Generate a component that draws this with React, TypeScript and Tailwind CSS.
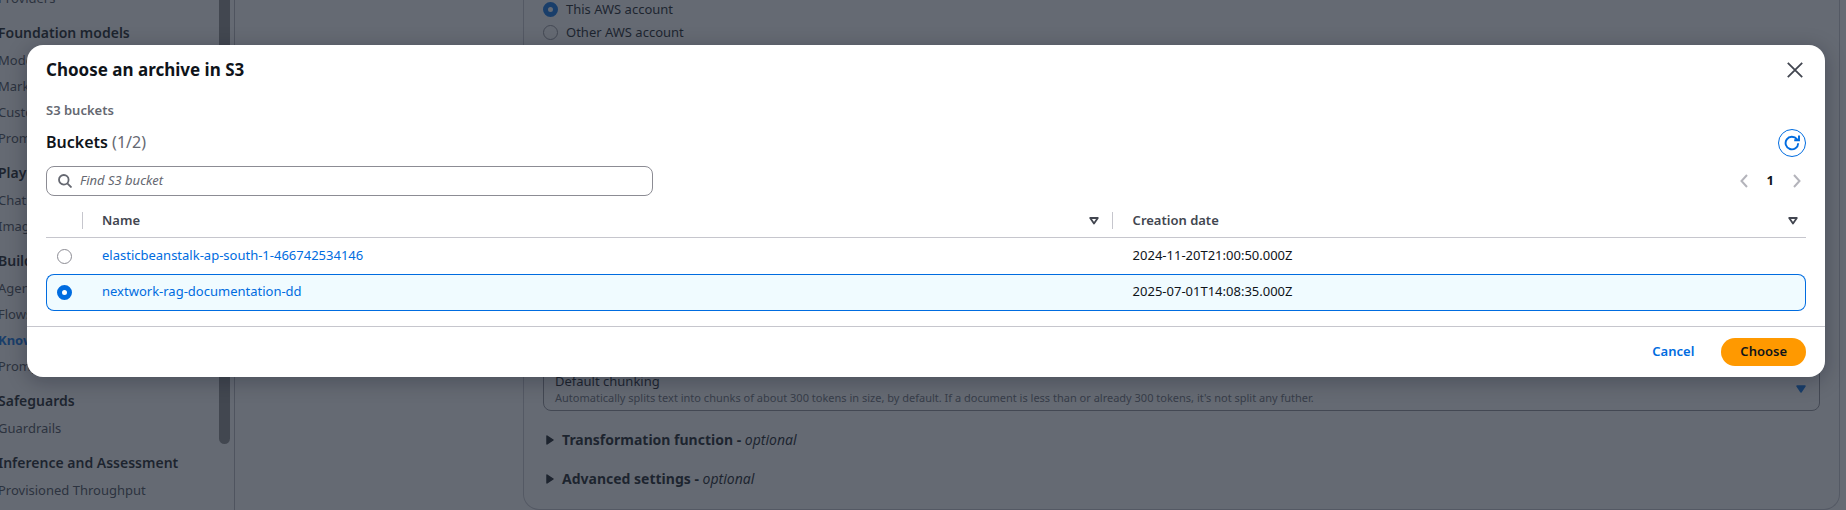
import { useState } from "react";

type NavItem = { label: string; current?: boolean };
type NavSection = { title: string; items: NavItem[] };

const sections: NavSection[] = [
  {
    title: "Foundation models",
    items: [
      { label: "Model catalog" },
      { label: "Marketplace" },
      { label: "Custom models" },
      { label: "Prompt routers" },
    ],
  },
  { title: "Playgrounds", items: [{ label: "Chat / Text" }, { label: "Image / Video" }] },
  {
    title: "Builder tools",
    items: [
      { label: "Agents" },
      { label: "Flows" },
      { label: "Knowledge Bases", current: true },
      { label: "Prompt Management" },
    ],
  },
  { title: "Safeguards", items: [{ label: "Guardrails" }] },
  { title: "Inference and Assessment", items: [{ label: "Provisioned Throughput" }] },
];

const buckets = [
  { name: "elasticbeanstalk-ap-south-1-466742534146", created: "2024-11-20T21:00:50.000Z" },
  { name: "nextwork-rag-documentation-dd", created: "2025-07-01T14:08:35.000Z" },
];

const radioClass =
  "m-0 block size-[15px] shrink-0 appearance-none rounded-full border border-[#8c8c94] bg-white checked:border-[5px] checked:border-[#006ce0]";

function NavLink({ label, current }: NavItem) {
  return (
    <li>
      <a
        href="#"
        className={
          current
            ? "block whitespace-nowrap font-bold leading-[26px] text-[#006ce0]"
            : "block whitespace-nowrap leading-[26px] text-[#424650]"
        }
      >
        {label}
      </a>
    </li>
  );
}

function SideNav() {
  return (
    <nav className="flex w-[235px] shrink-0 justify-between overflow-hidden border-r border-[#b4b4bb] pr-1">
      <div className="-ml-0.5 -mt-[15px] w-[200px]">
        <ul>
          <NavLink label="Providers" />
        </ul>
        {sections.map((section) => (
          <section key={section.title} className="mt-2">
            <h2 className="whitespace-nowrap text-sm font-semibold leading-7 text-[#0f141a]">{section.title}</h2>
            <ul>
              {section.items.map((item) => (
                <NavLink key={item.label} {...item} />
              ))}
            </ul>
          </section>
        ))}
      </div>
      <div className="h-[444px] w-[11px] rounded-b-full bg-[#8b8b8b]" />
    </nav>
  );
}

function Expandable({ title }: { title: string }) {
  return (
    <button type="button" className="flex items-center gap-2 text-left leading-5">
      <svg viewBox="0 0 8 10" className="ml-[3px] h-[10px] w-2" aria-hidden="true">
        <path d="M1 1v8l6-4z" fill="#0f141a" stroke="#0f141a" strokeWidth="1.5" strokeLinejoin="round" />
      </svg>
      <span className="text-sm leading-5 text-[#0f141a]">
        <b>{title} - </b>
        <i>optional</i>
      </span>
    </button>
  );
}

function SettingsPage() {
  return (
    <main className="flex min-w-0 grow pl-[288px] pr-[6px]">
      <div className="flex grow flex-col rounded-b-2xl border border-t-0 border-[#c6c6cd] px-[19px] pb-5">
        <fieldset className="flex flex-col gap-[3px] leading-5 text-[#0f141a]">
          <label className="-mt-px flex items-center gap-2">
            <input type="radio" name="account" defaultChecked className={radioClass} />
            This AWS account
          </label>
          <label className="flex items-center gap-2">
            <input type="radio" name="account" className={radioClass} />
            Other AWS account
          </label>
        </fieldset>
        <button
          type="button"
          aria-haspopup="listbox"
          className="mt-auto flex items-center justify-between rounded-lg border border-[#8c8c94] px-[11px] pb-1 pt-1 text-left"
        >
          <span className="flex flex-col">
            <span className="leading-[18px] text-[#0f141a]">Default chunking</span>
            <span className="text-[11px] leading-4 text-[#656871]">
              Automatically splits text into chunks of about 300 tokens in size, by default. If a document is less than
              or already 300 tokens, it's not split any futher.
            </span>
          </span>
          <svg viewBox="0 0 10 8" className="mr-0.5 h-2 w-[10px]" aria-hidden="true">
            <path d="M1 1h8l-4 6z" fill="#006ce0" stroke="#006ce0" strokeWidth="1.5" strokeLinejoin="round" />
          </svg>
        </button>
        <div className="mt-[19px] flex flex-col gap-[19px]">
          <Expandable title="Transformation function" />
          <Expandable title="Advanced settings" />
        </div>
      </div>
    </main>
  );
}

function SortIcon() {
  return (
    <svg viewBox="0 0 10 8" className="h-2 w-[10px]" fill="none" aria-hidden="true">
      <path d="M1.2 1h7.6L5 6.6z" stroke="#424650" strokeWidth="1.8" strokeLinejoin="round" />
    </svg>
  );
}

function Chevron({ d }: { d: string }) {
  return (
    <svg viewBox="0 0 8 14" className="h-[14px] w-2" fill="none" aria-hidden="true">
      <path d={d} stroke="#b4b4bb" strokeWidth="2" />
    </svg>
  );
}

function BucketTable({ selected, onSelect }: { selected: number; onSelect: (index: number) => void }) {
  return (
    <table className="mt-2 w-full table-fixed border-separate border-spacing-0 text-left">
      <thead>
        <tr className="h-[34px] text-[#424650]">
          <th className="w-[37px] border-b border-[#c6c6cd] p-0" aria-label="Selection">
            <div className="h-[17px] border-r border-[#c6c6cd]" />
          </th>
          <th className="w-[58.5%] border-b border-[#c6c6cd] p-0">
            <div className="flex h-[17px] items-center justify-between border-r border-[#c6c6cd] pl-[19px] pr-[13px] font-semibold">
              Name
              <SortIcon />
            </div>
          </th>
          <th className="border-b border-[#c6c6cd] p-0">
            <div className="flex h-[17px] items-center justify-between pl-5 pr-2 font-semibold">
              Creation date
              <SortIcon />
            </div>
          </th>
        </tr>
      </thead>
      <tbody>
        {buckets.map((bucket, index) => {
          const on = index === selected;
          const edge = on ? "border-y border-[#006ce0] bg-[#f0fbff]" : "";
          return (
            <tr key={bucket.name} className={on ? "h-[37px]" : "h-9"}>
              <td className={on ? `${edge} rounded-l-lg border-l p-0 pl-[10px]` : "p-0 pl-[11px]"}>
                <input
                  type="radio"
                  name="bucket"
                  aria-label={bucket.name}
                  checked={on}
                  onChange={() => onSelect(index)}
                  className={radioClass}
                />
              </td>
              <td className={`${edge} p-0 pb-[3px] pl-[19px]`}>
                <a href="#" className="block leading-5 text-[#006ce0]">
                  {bucket.name}
                </a>
              </td>
              <td className={on ? `${edge} rounded-r-lg border-r p-0 pb-[3px] pl-5` : "p-0 pb-[3px] pl-5"}>
                <span className="block leading-5 text-[#0f141a]">{bucket.created}</span>
              </td>
            </tr>
          );
        })}
      </tbody>
    </table>
  );
}

function ArchiveDialog() {
  const [selected, setSelected] = useState(1);
  return (
    <div
      role="dialog"
      aria-labelledby="dialog-title"
      className="grow self-start rounded-2xl bg-white shadow-[0_4px_20px_1px_rgba(0,7,22,0.25)]"
    >
      <header className="flex items-center justify-between pl-[19px] pr-[19px] pt-[13px]">
        <h1 id="dialog-title" className="text-[17px] font-bold leading-6 text-[#0f141a]">
          Choose an archive in S3
        </h1>
        <button type="button" aria-label="Close" className="mr-[3px]">
          <svg viewBox="0 0 16 16" className="size-4" fill="none" aria-hidden="true">
            <path d="M.8.8l14.4 14.4M15.2.8L.8 15.2" stroke="#424650" strokeWidth="1.8" />
          </svg>
        </button>
      </header>
      <div className="px-[19px] pb-[15px] pt-[18px]">
        <p className="font-semibold leading-5 text-[#656871]">S3 buckets</p>
        <div className="mt-[9px] flex items-start justify-between">
          <h2 className="text-base font-semibold leading-[26px] text-[#0f141a]">
            Buckets <span className="font-normal text-[#656871]">(1/2)</span>
          </h2>
          <button
            type="button"
            aria-label="Refresh"
            className="flex size-7 items-center justify-center rounded-full border border-[#006ce0]"
          >
            <svg viewBox="0 0 16 16" className="size-4" fill="none" aria-hidden="true">
              <path
                d="M14.2 8.2A6.3 6.3 0 1 1 12.9 4.2L14 5.2M15 .4V5.2H10.2"
                stroke="#006ce0"
                strokeWidth="1.9"
              />
            </svg>
          </button>
        </div>
        <div className="mt-[9px] flex items-center justify-between">
          <div className="flex h-[30px] w-[34.5%] items-center gap-2 rounded-lg border border-[#8c8c94] px-[11px]">
            <svg viewBox="0 0 14 14" className="size-[14px] shrink-0" fill="none" aria-hidden="true">
              <circle cx="5.8" cy="5.8" r="4.8" stroke="#656871" strokeWidth="1.8" />
              <path d="M9.3 9.3l4.2 4.2" stroke="#656871" strokeWidth="1.8" />
            </svg>
            <input
              type="search"
              aria-label="Find S3 bucket"
              placeholder="Find S3 bucket"
              className="min-w-0 grow bg-transparent outline-none placeholder:italic placeholder:text-[#656871]"
            />
          </div>
          <div className="flex items-center gap-[19px] pr-[5px] font-bold text-[#0f141a]">
            <button type="button" aria-label="Previous page" disabled>
              <Chevron d="M7 1L1.5 7 7 13" />
            </button>
            <button type="button">1</button>
            <button type="button" aria-label="Next page" disabled>
              <Chevron d="M1 1l5.5 6L1 13" />
            </button>
          </div>
        </div>
        <BucketTable selected={selected} onSelect={setSelected} />
      </div>
      <footer className="flex justify-end gap-2 border-t border-[#c6c6cd] px-[19px] py-[11px]">
        <button type="button" className="h-7 rounded-full px-[19px] font-semibold text-[#006ce0]">
          Cancel
        </button>
        <button type="button" className="h-7 rounded-full bg-[#ff9900] px-[19px] font-semibold text-[#0f141a]">
          Choose
        </button>
      </footer>
    </div>
  );
}

export default function App() {
  return (
    <div className="relative h-screen overflow-hidden bg-white font-['Noto_Sans','Open_Sans',sans-serif] text-[13px]">
      <div className="flex h-full">
        <SideNav />
        <SettingsPage />
      </div>
      <div className="absolute inset-0 flex bg-[#232b37]/70 pl-[27px] pr-[21px] pt-[45px]">
        <ArchiveDialog />
      </div>
    </div>
  );
}
